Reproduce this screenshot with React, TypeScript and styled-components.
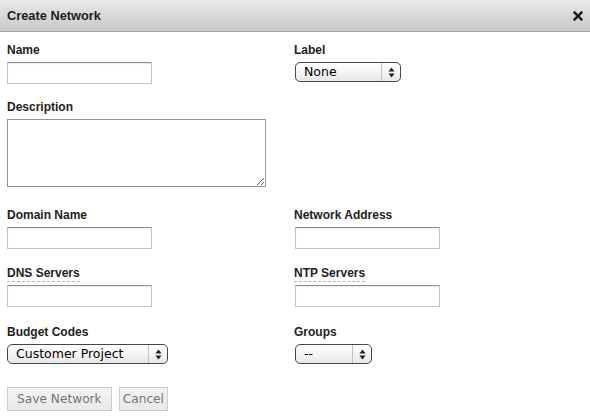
import React from "react";
import styled, { createGlobalStyle } from "styled-components";

const Global = createGlobalStyle`
  html, body { margin: 0; padding: 0; background: #fff; }
  body { font-family: "Liberation Sans", Arial, sans-serif; }
  * { box-sizing: border-box; }
`;

const Dialog = styled.div`
  width: 590px;
  height: 420px;
  display: flex;
  flex-direction: column;
  background: #fff;
`;

const Header = styled.div`
  height: 32px;
  border-bottom: 1px solid #a6a6a6;
  background: linear-gradient(#e8e8e8, #c9c9c9);
  display: flex;
  align-items: center;
  justify-content: space-between;
  padding: 0 7px 0 7px;
`;

const Title = styled.h1`
  margin: 0;
  font: bold 12.8px "Liberation Sans", Arial, sans-serif;
  color: #1e1e1e;
`;

const Close = styled.button`
  border: 0;
  background: none;
  padding: 0;
  display: flex;
  cursor: pointer;
`;

const Form = styled.form`
  padding: 0 7px;
  display: flex;
  flex-direction: column;
`;

const Row = styled.div<{ $mt: number }>`
  display: grid;
  grid-template-columns: 287px 1fr;
  margin-top: ${(p) => p.$mt}px;
`;

const Field = styled.div<{ $indent?: number }>`
  display: flex;
  flex-direction: column;
  align-items: flex-start;
  & > input,
  & > div {
    margin-left: ${(p) => p.$indent ?? 0}px;
  }
`;

const Label = styled.label`
  display: block;
  font: bold 12px/14px "Liberation Sans", Arial, sans-serif;
  color: #222;
  margin-bottom: 5px;
`;

const Abbr = styled.abbr`
  text-decoration: none;
  border-bottom: 1px dashed #b5b5b5;
  padding-bottom: 1px;
`;

const TextInput = styled.input`
  width: 145px;
  height: 22px;
  margin: 0;
  border: 1px solid #c4c4c4;
  border-top-color: #8c8c8c;
  box-shadow: inset 0 1px 1px rgba(0, 0, 0, 0.08);
  background: #fff;
  font: 12px "DejaVu Sans", sans-serif;
  padding: 2px 4px;
  outline: none;
`;

const TextArea = styled.textarea`
  width: 259px;
  height: 68px;
  margin: 0;
  border: 1px solid #949494;
  background: #fff;
  font: 12px "DejaVu Sans", sans-serif;
  padding: 3px;
  outline: none;
`;

const SelectBox = styled.div<{ $w: number }>`
  width: ${(p) => p.$w}px;
  height: 20px;
  display: flex;
  border: 1px solid #474747;
  border-radius: 5px;
  background: linear-gradient(#ffffff 0%, #f6f6f6 45%, #e6e6e6 100%);
  overflow: hidden;
`;

const NativeSelect = styled.select`
  flex: 1;
  min-width: 0;
  appearance: none;
  -webkit-appearance: none;
  border: 0;
  background: transparent;
  font: 12.5px/18px "DejaVu Sans", sans-serif;
  color: #000;
  padding: 0 0 0 8px;
  margin: 0;
  outline: none;
`;

const ArrowCell = styled.span`
  width: 19px;
  border-left: 1px solid #c2c2c2;
  display: flex;
  align-items: center;
  justify-content: center;
`;

const Buttons = styled.div`
  display: flex;
  gap: 7px;
  margin-top: 23px;
`;

const Button = styled.button<{ $pad: number }>`
  height: 24px;
  padding: 0 ${(p) => p.$pad}px;
  margin: 0;
  border: 1px solid #cdcdcd;
  background: linear-gradient(#f3f3f3, #e9e9e9);
  color: #747474;
  font: 12.2px "DejaVu Sans", sans-serif;
  cursor: pointer;
`;

const Arrows = () => (
  <svg width="7" height="11" viewBox="0 0 7 11">
    <polygon points="0.5,4.5 3.5,0.5 6.5,4.5" fill="#1f1f1f" />
    <polygon points="0.5,6.5 3.5,10.5 6.5,6.5" fill="#1f1f1f" />
  </svg>
);

const XIcon = () => (
  <svg width="10" height="10" viewBox="0 0 10 10">
    <path d="M1.6 1.6 L8.4 8.4 M8.4 1.6 L1.6 8.4" stroke="#1c1c1c" strokeWidth="2.5" strokeLinecap="square" />
  </svg>
);

const Select = ({ w, value, options }: { w: number; value: string; options: string[] }) => (
  <SelectBox $w={w}>
    <NativeSelect defaultValue={value}>
      {options.map((o) => (
        <option key={o}>{o}</option>
      ))}
    </NativeSelect>
    <ArrowCell>
      <Arrows />
    </ArrowCell>
  </SelectBox>
);

export default function App() {
  return (
    <>
      <Global />
      <Dialog>
        <Header>
          <Title>Create Network</Title>
          <Close type="button" aria-label="Close">
            <XIcon />
          </Close>
        </Header>
        <Form onSubmit={(e) => e.preventDefault()}>
          <Row $mt={11}>
            <Field>
              <Label>Name</Label>
              <TextInput />
            </Field>
            <Field $indent={1}>
              <Label>Label</Label>
              <Select w={106} value="None" options={["None", "Red", "Green", "Blue"]} />
            </Field>
          </Row>
          <Row $mt={16}>
            <Field>
              <Label>Description</Label>
              <TextArea />
            </Field>
          </Row>
          <Row $mt={21}>
            <Field>
              <Label>Domain Name</Label>
              <TextInput />
            </Field>
            <Field $indent={1}>
              <Label>Network Address</Label>
              <TextInput />
            </Field>
          </Row>
          <Row $mt={17}>
            <Field>
              <Label>
                <Abbr title="Domain Name System">DNS Servers</Abbr>
              </Label>
              <TextInput />
            </Field>
            <Field $indent={1}>
              <Label>
                <Abbr title="Network Time Protocol">NTP Servers</Abbr>
              </Label>
              <TextInput />
            </Field>
          </Row>
          <Row $mt={18}>
            <Field>
              <Label>Budget Codes</Label>
              <Select w={161} value="Customer Project" options={["Customer Project", "Internal"]} />
            </Field>
            <Field $indent={1}>
              <Label>Groups</Label>
              <Select w={77} value="--" options={["--"]} />
            </Field>
          </Row>
          <Buttons>
            <Button type="submit" $pad={9}>Save Network</Button>
            <Button type="button" $pad={3}>Cancel</Button>
          </Buttons>
        </Form>
      </Dialog>
    </>
  );
}
